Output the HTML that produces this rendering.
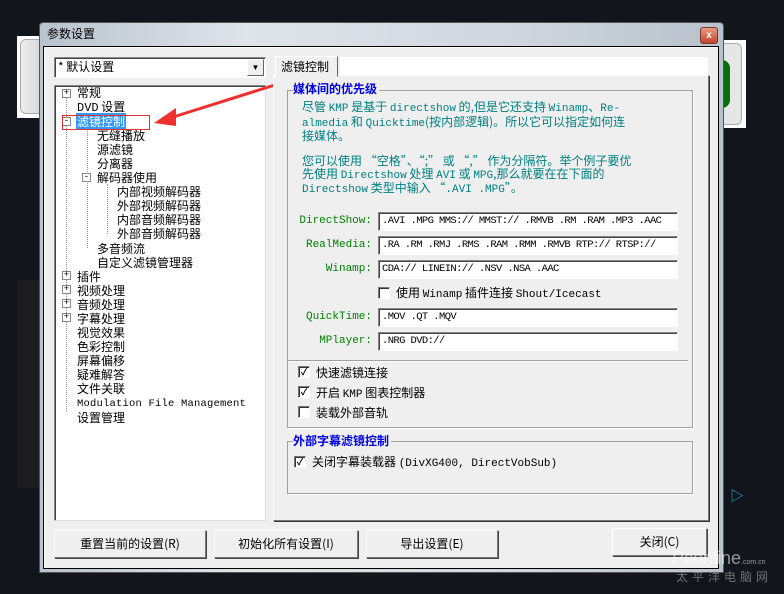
<!DOCTYPE html>
<html><head><meta charset="utf-8"><style>
*{margin:0;padding:0;box-sizing:border-box}
body{width:784px;height:594px;background:#12151c;position:relative;overflow:hidden;font-family:"Liberation Sans","Noto Sans CJK SC",sans-serif;font-size:12px;color:#000}
.a{position:absolute}
.cj{font-family:"Noto Sans CJK SC","WenQuanYi Zen Hei",sans-serif;font-size:12px;line-height:14px;white-space:nowrap}
.mono{font-family:"Liberation Mono","Noto Sans CJK SC",monospace}
.btn{position:absolute;background:#efefef;border:1px solid;border-color:#fff #777 #777 #fff;box-shadow:1px 1px 0 #444;text-align:center;line-height:26px;font-family:"Noto Sans CJK SC",sans-serif;font-size:12px}
.inp{position:absolute;background:#fff;border:1px solid;border-color:#888 #fff #fff #888;box-shadow:inset 1px 1px 0 #444;font-family:"Liberation Mono",monospace;font-size:10.5px;line-height:17px;padding-left:3px;white-space:nowrap;overflow:hidden;letter-spacing:-0.6px}
.lbl{position:absolute;color:#008000;font-family:"Liberation Mono",monospace;font-size:11px;text-align:right;width:90px}
.grp{position:absolute;border:1px solid #a0a0a0;box-shadow:1px 1px 0 #fff}
.gt{position:absolute;color:#0000e0;font-weight:bold;background:#efefef;font-family:"Noto Sans CJK SC",sans-serif;font-size:12px;line-height:14px;padding-right:2px}
.cb{position:absolute;width:12px;height:12px;background:#fff;border:1px solid;border-color:#777 #fff #fff #777;box-shadow:inset 1px 1px 0 #333;font-size:9px;line-height:10px;text-align:center;font-weight:bold}
.pm{position:absolute;width:9px;height:9px;border:1px solid #888;background:#fff;font-size:9px;line-height:7px;text-align:center;font-family:"Liberation Mono",monospace}
</style></head><body>
<div class="a" style="left:17px;top:36px;width:24px;height:82px;background:#fff"><div class="a" style="left:3px;top:3px;width:30px;height:75px;border:1px solid #aaa;border-radius:6px;background:linear-gradient(90deg,#eee,#ccc)"></div></div>
<div class="a" style="left:720px;top:40px;width:26px;height:88px;background:#fff"><div class="a" style="left:-6px;top:3px;width:28px;height:82px;border:1px solid #aaa;border-radius:6px;background:#e6e6e6"></div><div class="a" style="left:0;top:20px;width:10px;height:48px;background:#0a6e0a;border-radius:0 8px 8px 0"></div></div>
<div class="a" style="left:17px;top:280px;width:24px;height:208px;background:#1c1c20"></div>
<div class="a" style="left:730px;top:486px;color:#1aa0c0;font-size:14px;font-weight:bold">▷</div>
<div class="a" style="left:39px;top:22px;width:685px;height:551px;background:linear-gradient(90deg,#b9c3cd,#dfe4ea 30%,#cfd6dd 70%,#b8c2cc);border:1px solid #555;border-radius:4px 4px 0 0"></div>
<div class="a cj" style="left:47px;top:27px;color:#000">参数设置</div>
<div class="a" style="left:700px;top:27px;width:18px;height:17px;background:linear-gradient(#e89a85,#c4452a);border:1px solid #7a3a2a;border-radius:3px;color:#fff;font-size:10px;font-weight:bold;text-align:center;line-height:15px">x</div>
<div class="a" style="left:43px;top:46px;width:676px;height:523px;background:#efefef;border:1px solid #000;box-shadow:inset 1px 1px 0 #fff"></div>
<div class="a" style="left:54px;top:57px;width:212px;height:21px;background:#fff;border:1px solid;border-color:#888 #fff #fff #888;box-shadow:inset 1px 1px 0 #444"></div>
<div class="a cj" style="left:58px;top:60px">* 默认设置</div>
<div class="a" style="left:247px;top:59px;width:17px;height:17px;background:#efefef;border:1px solid;border-color:#fff #666 #666 #fff;font-size:8px;text-align:center;line-height:15px">▼</div>
<div class="a" style="left:54px;top:85px;width:212px;height:436px;background:#fff;border:1px solid;border-color:#888 #ddd #ddd #888;box-shadow:inset 1px 1px 0 #444"></div>
<div class="a" style="left:66px;top:98px;height:313px;border-left:1px dotted #999"></div>
<div class="a" style="left:87px;top:128px;height:120px;border-left:1px dotted #999"></div>
<div class="a" style="left:107px;top:184px;height:50px;border-left:1px dotted #999"></div>
<div class="a cj" style="left:60px;top:86px;line-height:14.05px">
<div style="padding-left:17px">常规</div>
<div style="padding-left:17px"><span class="mono">DVD</span> 设置</div>
<div style="padding-left:16px"><span style="background:#3399ff;color:#fff;padding:0 1px">滤镜控制</span></div>
<div style="padding-left:37px">无缝播放</div>
<div style="padding-left:37px">源滤镜</div>
<div style="padding-left:37px">分离器</div>
<div style="padding-left:37px">解码器使用</div>
<div style="padding-left:57px">内部视频解码器</div>
<div style="padding-left:57px">外部视频解码器</div>
<div style="padding-left:57px">内部音频解码器</div>
<div style="padding-left:57px">外部音频解码器</div>
<div style="padding-left:37px">多音频流</div>
<div style="padding-left:37px">自定义滤镜管理器</div>
<div style="padding-left:17px">插件</div>
<div style="padding-left:17px">视频处理</div>
<div style="padding-left:17px">音频处理</div>
<div style="padding-left:17px">字幕处理</div>
<div style="padding-left:17px">视觉效果</div>
<div style="padding-left:17px">色彩控制</div>
<div style="padding-left:17px">屏幕偏移</div>
<div style="padding-left:17px">疑难解答</div>
<div style="padding-left:17px">文件关联</div>
<div style="padding-left:17px" class="mono"><span style="font-size:10.5px;font-family:'Liberation Mono',monospace;letter-spacing:0.2px">Modulation File Management</span></div>
<div style="padding-left:17px">设置管理</div>
</div>
<div class="pm" style="left:62px;top:89px">+</div>
<div class="pm" style="left:62px;top:117px">-</div>
<div class="pm" style="left:82px;top:173px">-</div>
<div class="pm" style="left:62px;top:271px">+</div>
<div class="pm" style="left:62px;top:285px">+</div>
<div class="pm" style="left:62px;top:299px">+</div>
<div class="pm" style="left:62px;top:313px">+</div>
<div class="a" style="left:62px;top:115px;width:88px;height:15px;border:1px solid #e03030"></div>
<svg class="a" style="left:140px;top:70px" width="150" height="70"><path d="M138 14 L30 48" stroke="#ee3030" stroke-width="3" fill="none"/><path d="M14 53 L36 38 L36 56 Z" fill="#ee3030"/></svg>
<div class="a" style="left:273px;top:75px;width:436px;height:446px;border:1px solid;border-color:#fff #777 #777 #fff;background:#efefef;box-shadow:1px 1px 0 #333"></div>
<div class="a cj" style="left:275px;top:56px;width:63px;height:21px;background:#efefef;border:1px solid;border-color:#fff #666 #efefef #fff;line-height:19px;padding-left:5px">滤镜控制</div>
<div class="a" style="left:340px;top:57px;width:368px;height:18px;background:#fff"></div>
<div class="grp" style="left:287px;top:90px;width:406px;height:338px"></div>
<div class="gt" style="left:293px;top:82px">媒体间的优先级</div>
<div class="a cj" style="left:302px;top:101px;color:#008080;line-height:12.5px;font-size:12px">尽管 <span class="mono" style="font-size:11px">KMP</span> 是基于 <span class="mono" style="font-size:11px">directshow</span> 的,但是它还支持 <span class="mono" style="font-size:11px">Winamp</span>、<span class="mono" style="font-size:11px">Re-</span><br><span class="mono" style="font-size:11px">almedia</span> 和 <span class="mono" style="font-size:11px">Quicktime</span>(按内部逻辑)。所以它可以指定如何连<br>接媒体。<br><br>您可以使用 “空格”、“;” 或 “,” 作为分隔符。举个例子要优<br>先使用 <span class="mono" style="font-size:11px">Directshow</span> 处理 <span class="mono" style="font-size:11px">AVI</span> 或 <span class="mono" style="font-size:11px">MPG</span>,那么就要在在下面的<br><span class="mono" style="font-size:11px">Directshow</span> 类型中输入 “<span class="mono" style="font-size:11px">.AVI .MPG</span>”。</div>
<div class="lbl" style="left:282px;top:215px">DirectShow:</div>
<div class="inp" style="left:378px;top:212px;width:300px;height:19px">.AVI .MPG MMS:// MMST:// .RMVB .RM .RAM .MP3 .AAC</div>
<div class="lbl" style="left:282px;top:239px">RealMedia:</div>
<div class="inp" style="left:378px;top:236px;width:300px;height:19px">.RA .RM .RMJ .RMS .RAM .RMM .RMVB RTP:// RTSP://</div>
<div class="lbl" style="left:282px;top:263px">Winamp:</div>
<div class="inp" style="left:378px;top:260px;width:300px;height:19px">CDA:// LINEIN:// .NSV .NSA .AAC</div>
<div class="cb" style="left:378px;top:287px"></div>
<div class="a cj" style="left:396px;top:286px">使用 <span class="mono" style="font-size:11px">Winamp</span> 插件连接 <span class="mono" style="font-size:11px">Shout/Icecast</span></div>
<div class="lbl" style="left:282px;top:311px">QuickTime:</div>
<div class="inp" style="left:378px;top:308px;width:300px;height:19px">.MOV .QT .MQV</div>
<div class="lbl" style="left:282px;top:335px">MPlayer:</div>
<div class="inp" style="left:378px;top:332px;width:300px;height:19px">.NRG DVD://</div>
<div class="a" style="left:288px;top:360px;width:400px;border-top:1px solid #a0a0a0;border-bottom:1px solid #fff"></div>
<div class="cb" style="left:298px;top:366px">✓</div><div class="a cj" style="left:316px;top:366px">快速滤镜连接</div>
<div class="cb" style="left:298px;top:386px">✓</div><div class="a cj" style="left:316px;top:386px">开启 <span class="mono" style="font-size:11px">KMP</span> 图表控制器</div>
<div class="cb" style="left:298px;top:406px"></div><div class="a cj" style="left:316px;top:406px">装载外部音轨</div>
<div class="grp" style="left:287px;top:441px;width:406px;height:53px"></div>
<div class="gt" style="left:293px;top:434px">外部字幕滤镜控制</div>
<div class="cb" style="left:294px;top:456px">✓</div><div class="a cj" style="left:312px;top:455px">关闭字幕装载器 <span class="mono" style="font-size:11px">(DivXG400, DirectVobSub)</span></div>
<div class="btn" style="left:54px;top:530px;width:152px;height:28px">重置当前的设置(R)</div>
<div class="btn" style="left:214px;top:530px;width:144px;height:28px">初始化所有设置(I)</div>
<div class="btn" style="left:366px;top:530px;width:132px;height:28px">导出设置(E)</div>
<div class="btn" style="left:612px;top:528px;width:95px;height:28px">关闭(C)</div>
<div class="a" style="left:672px;top:548px;color:rgba(255,255,255,0.55);font-size:18px;font-family:'Liberation Sans',sans-serif">Pconline<span style="font-size:7px">.com.cn</span></div>
<div class="a cj" style="left:676px;top:570px;color:rgba(200,200,200,0.5);font-size:12px;letter-spacing:4px">太平洋电脑网</div>
</body></html>
